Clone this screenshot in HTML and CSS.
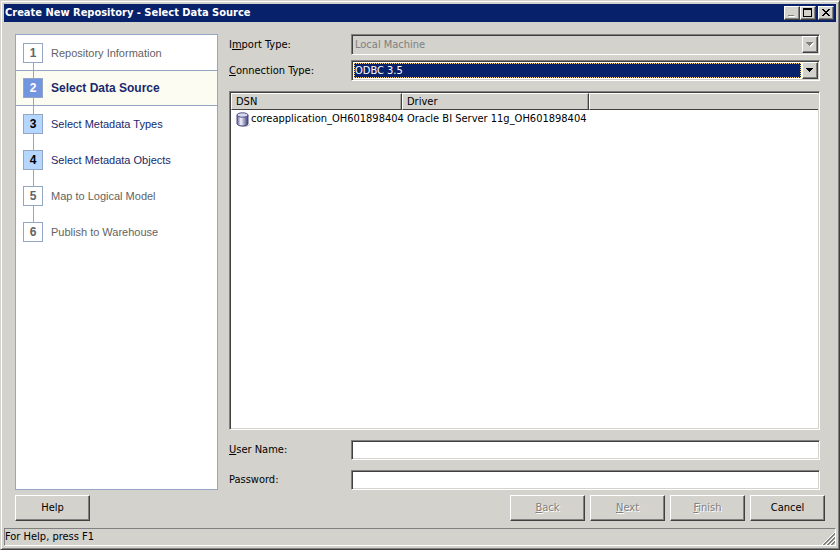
FILE: index.html
```html
<!DOCTYPE html>
<html lang="en">
<head>
    <meta charset="UTF-8">
    <meta name="viewport" content="width=device-width, initial-scale=1.0">
    <title>Create New Repository - Select Data Source</title>
    <link rel="stylesheet" href="styles.css">
</head>
<body>
    <div class="window">
        <header class="titlebar">
            <h1>Create New Repository - Select Data Source</h1>
            <button class="win-btn" type="button" aria-label="Minimize">
                <svg width="12" height="10" shape-rendering="crispEdges"><path d="M3 8h6v1h-6z" fill="#fff"/><path d="M2 7h6v1h-6z" fill="#808080"/></svg>
            </button>
            <button class="win-btn" type="button" aria-label="Maximize">
                <svg width="12" height="10" shape-rendering="crispEdges"><path d="M1 0h9v9h-9zM2 2v6h7v-6z" fill="#000" fill-rule="evenodd"/></svg>
            </button>
            <button class="win-btn close" type="button" aria-label="Close">
                <svg width="12" height="10" shape-rendering="crispEdges"><path d="M2 1h2v1h1v1h2v-1h1v-1h2v1h-1v1h-1v1h-1v1h1v1h1v1h1v1h-2v-1h-1v-1h-2v1h-1v1h-2v-1h1v-1h1v-1h1v-1h-1v-1h-1v-1h-1z" fill="#000"/></svg>
            </button>
        </header>

        <main class="content">
            <ol class="steps">
                <li class="step done"><span class="num">1</span>Repository Information</li>
                <li class="step current"><span class="num">2</span>Select Data Source</li>
                <li class="step ready"><span class="num">3</span>Select Metadata Types</li>
                <li class="step ready"><span class="num">4</span>Select Metadata Objects</li>
                <li class="step"><span class="num">5</span>Map to Logical Model</li>
                <li class="step"><span class="num">6</span>Publish to Warehouse</li>
            </ol>

            <div class="form">
                <div class="field">
                    <label for="importType">I<u>m</u>port Type:</label>
                    <div class="combo disabled">
                        <select id="importType" disabled>
                            <option>Local Machine</option>
                        </select>
                        <span class="arrow">
                            <svg width="8" height="5" shape-rendering="crispEdges"><path d="M1 1h7v1h-1v1h-1v1h-1v1h-1v-1h-1v-1h-1v-1h-1z" fill="#fff"/><path d="M0 0h7v1h-1v1h-1v1h-1v1h-1v-1h-1v-1h-1v-1h-1z" fill="#808080"/></svg>
                        </span>
                    </div>
                </div>
                <div class="field">
                    <label for="connType"><u>C</u>onnection Type:</label>
                    <div class="combo">
                        <select id="connType">
                            <option>ODBC 3.5</option>
                        </select>
                        <span class="arrow">
                            <svg width="8" height="5" shape-rendering="crispEdges"><path d="M0 0h7v1h-1v1h-1v1h-1v1h-1v-1h-1v-1h-1v-1h-1z" fill="#000"/></svg>
                        </span>
                    </div>
                </div>

                <div class="list">
                    <table>
                        <thead>
                            <tr><th class="col-dsn">DSN</th><th class="col-driver">Driver</th><th class="col-rest"></th></tr>
                        </thead>
                        <tbody>
                            <tr>
                                <td>
                                    <div class="dsn">
                                        <svg width="14" height="15" viewBox="0 0 14 15">
                                            <defs>
                                                <linearGradient id="cyl">
                                                    <stop offset="0" stop-color="#5c5c92"/>
                                                    <stop offset="0.35" stop-color="#f4f4ff"/>
                                                    <stop offset="1" stop-color="#3c3c7c"/>
                                                </linearGradient>
                                            </defs>
                                            <path d="M3 13h9l2-1v1q-2 2-6 2-4 0-5-2z" fill="#c4c4c4"/>
                                            <path d="M1 3v9q1 2 5.500 2t5.500-2V3z" fill="url(#cyl)" stroke="#4a4a80"/>
                                            <ellipse cx="6.500" cy="3" rx="5.500" ry="2.200" fill="#d8d8ee" stroke="#4a4a80"/>
                                        </svg>
                                        coreapplication_OH601898404
                                    </div>
                                </td>
                                <td>Oracle BI Server 11g_OH601898404</td>
                                <td></td>
                            </tr>
                        </tbody>
                    </table>
                </div>

                <div class="field login">
                    <label for="userName"><u>U</u>ser Name:</label>
                    <input id="userName" type="text">
                </div>
                <div class="field login">
                    <label for="password">Password:</label>
                    <input id="password" type="password">
                </div>
            </div>
        </main>

        <div class="buttons">
            <button class="btn help" type="button">Help</button>
            <button class="btn" type="button" disabled><u>B</u>ack</button>
            <button class="btn" type="button" disabled><u>N</u>ext</button>
            <button class="btn" type="button" disabled><u>F</u>inish</button>
            <button class="btn" type="button">Cancel</button>
        </div>

        <footer class="statusbar">
            <span>For Help, press F1</span>
            <svg width="13" height="13"><path d="M0 13L13 0M4 13L13 4M8 13L13 8" stroke="#fff"/><path d="M1 13L13 1M2 13L13 2M5 13L13 5M6 13L13 6M9 13L13 9M10 13L13 10" stroke="#808080"/></svg>
        </footer>
    </div>
</body>
</html>
```

FILE: styles.css
```css
* {
    box-sizing: border-box;
}

body {
    margin: 0;
    font-family: "DejaVu Sans Condensed", "DejaVu Sans", sans-serif;
    font-stretch: condensed;
    font-size: 11px;
    line-height: 14px;
    color: #000;
    background-color: #d3d2cc;
}

button, input, select {
    font: inherit;
    color: inherit;
    margin: 0;
    padding: 0;
    border-radius: 0;
}

.window {
    display: flex;
    flex-direction: column;
    min-height: 100vh;
    padding: 2px;
    border: 1px solid;
    border-color: #d3d2cc #404040 #404040 #d3d2cc;
    box-shadow: inset 1px 1px 0 #fff, inset -1px -1px 0 #808080;
}

/* Title bar */
.titlebar {
    display: flex;
    align-items: center;
    height: 18px;
    margin: 1px;
    padding: 0 2px 0 1px;
    background-color: #08216b;
}

.titlebar h1 {
    flex: 1;
    margin: 0;
    font-size: 11px;
    font-weight: bold;
    color: #fff;
}

.win-btn {
    display: flex;
    justify-content: center;
    align-items: center;
    width: 16px;
    height: 14px;
    border: 1px solid;
    border-color: #fff #404040 #404040 #fff;
    background-color: #d3d2cc;
    box-shadow: inset -1px -1px 0 #808080;
}

.win-btn.close {
    margin-left: 2px;
}

/* Main area */
.content {
    flex: 1;
    display: flex;
    gap: 11px;
    padding: 11px 17px 0 12px;
}

/* Wizard steps */
.steps {
    flex: 0 0 203px;
    margin: 0;
    padding: 0;
    list-style: none;
    font-family: "Liberation Sans", Arial, sans-serif;
    background-color: #fff;
    border: 1px solid #94a5c6;
}

.step {
    position: relative;
    display: flex;
    align-items: center;
    gap: 8px;
    height: 36px;
    padding-left: 7px;
    color: #636363;
}

.step.done {
    height: 35px;
}

.step + .step::before {
    content: "";
    position: absolute;
    left: 17px;
    top: -8px;
    width: 1px;
    height: 16px;
    background-color: #94a5c6;
}

.num {
    width: 20px;
    height: 20px;
    border: 1px solid #94a5c6;
    font-size: 12px;
    font-weight: bold;
    line-height: 18px;
    text-align: center;
}

.step.ready {
    color: #18296b;
}

.step.ready .num {
    color: #000;
    background-color: #b5d6ff;
}

.step.current {
    font-size: 12px;
    font-weight: bold;
    color: #18296b;
    background-color: #fdfcf3;
    box-shadow: inset 0 1px 0 #94a5c6, inset 0 -1px 0 #94a5c6;
}

.step.current .num {
    color: #fff;
    background-color: #7394de;
}

/* Form */
.form {
    flex: 1;
    display: flex;
    flex-direction: column;
    min-width: 0;
}

.field {
    display: flex;
    align-items: center;
    margin-bottom: 5px;
}

.field label {
    flex: 0 0 122px;
}

.combo,
.field input,
.list {
    border: 1px solid;
    border-color: #808080 #fff #fff #808080;
    box-shadow: inset 1px 1px 0 #404040, inset -1px -1px 0 #d3d2cc;
    background-color: #fff;
}

.combo {
    flex: 1;
    display: flex;
    height: 21px;
    padding: 1px;
}

.combo select {
    flex: 1;
    margin: 1px;
    appearance: none;
    border: 1px dotted #ffd66b;
    outline: none;
    color: #fff;
    background-color: #08216b;
}

.combo.disabled,
.combo.disabled select {
    color: #808080;
    background-color: #d3d2cc;
    border-style: solid;
    opacity: 1;
}

.combo.disabled select {
    border-color: #d3d2cc;
}

.arrow {
    display: flex;
    justify-content: center;
    align-items: center;
    width: 16px;
    border: 1px solid;
    border-color: #fff #404040 #404040 #fff;
    background-color: #d3d2cc;
    box-shadow: inset -1px -1px 0 #808080;
}

.field input {
    flex: 1;
    height: 20px;
    padding: 0 4px;
    outline: none;
}

/* Data source list */
.list {
    flex: 1;
    margin: 5px 0 10px;
    padding: 1px;
}

.list table {
    width: 100%;
    table-layout: fixed;
    border-collapse: separate;
    border-spacing: 0;
}

.list th {
    height: 17px;
    padding: 0 4px;
    font-weight: normal;
    text-align: left;
    background-color: #d3d2cc;
    border: 1px solid;
    border-color: #fff #404040 #404040 #fff;
    box-shadow: inset -1px 0 0 #a5a59c;
}

.list .col-rest {
    border-right: 0;
    box-shadow: none;
}

.list td {
    height: 18px;
    padding: 0 0 0 5px;
    white-space: nowrap;
}

.col-dsn {
    width: 171px;
}

.col-driver {
    width: 187px;
}

.dsn {
    display: flex;
    align-items: center;
    gap: 1px;
}

.dsn svg {
    flex-shrink: 0;
}

.login {
    margin-bottom: 10px;
}

.login:last-child {
    margin-bottom: 0;
}

/* Bottom buttons */
.buttons {
    display: flex;
    gap: 5px;
    padding: 5px 12px 7px;
}

.btn {
    width: 75px;
    height: 26px;
    border: 1px solid;
    border-color: #fff #404040 #404040 #fff;
    background-color: #d3d2cc;
    box-shadow: inset -1px -1px 0 #808080;
}

.btn.help {
    margin-right: auto;
}

.btn:disabled {
    color: #808080;
    text-shadow: 1px 1px 0 #fff;
}

/* Status bar */
.statusbar {
    display: flex;
    justify-content: space-between;
    align-items: flex-end;
    height: 18px;
    margin: 0 1px 1px;
    border: 1px solid;
    border-color: #808080 #fff #fff #808080;
}

.statusbar span {
    align-self: center;
}
```
